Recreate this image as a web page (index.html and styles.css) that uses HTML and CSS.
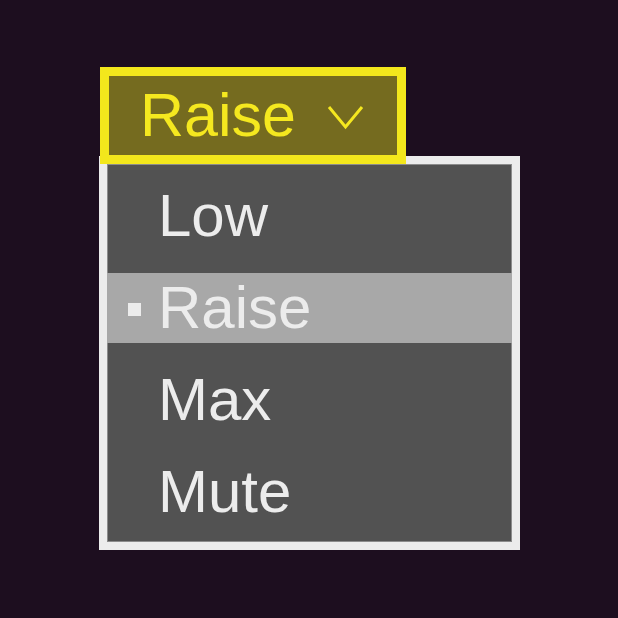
FILE: index.html
```html
<!DOCTYPE html>
<html lang="en">
<head>
    <meta charset="UTF-8">
    <meta name="viewport" content="width=device-width, initial-scale=1.0">
    <title>Volume select</title>
    <link rel="stylesheet" href="styles.css">
</head>
<body>

    <!-- Dropdown, opened -->
    <div class="select">
        <button class="select-button" type="button">
            <span class="select-value">Raise</span>
            <svg class="chevron" width="37" height="25" viewBox="0 0 37 25">
                <polyline points="2,2 18.5,22 35,2" fill="none" stroke="currentColor" stroke-width="3"/>
            </svg>
        </button>

        <ul class="select-list">
            <li class="option">Low</li>
            <li class="option selected">Raise</li>
            <li class="option">Max</li>
            <li class="option">Mute</li>
        </ul>
    </div>

</body>
</html>
```

FILE: styles.css
```css
html, body {
    min-height: 100%;
}

body {
    margin: 0;
    padding: 0;
    min-height: 618px;
    background-color: #1d0e1f;
    font-family: "Liberation Sans", Arial, sans-serif;
}

.select {
    display: flex;
    flex-direction: column;
    align-items: flex-start;
    padding: 67px 0 0 100px;
}

/* Closed button */
.select-button {
    position: relative;
    z-index: 2;
    box-sizing: border-box;
    width: 306px;
    height: 97px;
    margin: 0;
    padding: 0 33px 0 31px;
    display: flex;
    align-items: center;
    justify-content: space-between;
    background-color: #756b1f;
    border: 9px solid #f3e71c;
    color: #f5e81f;
    font-family: inherit;
    font-size: 61px;
    line-height: 79px;
}

.chevron {
    display: block;
    margin-top: 3px;
}

/* Popup list, tucked under the button */
.select-list {
    position: relative;
    z-index: 1;
    box-sizing: border-box;
    width: 421px;
    height: 394px;
    margin: -8px 0 0 -1px;
    padding: 17px 0 0 0;
    list-style: none;
    background-color: #525252;
    border: 8px solid #ececec;
    box-shadow: inset 0 0 0 1px #8c8c8c;
    display: flex;
    flex-direction: column;
    gap: 22px;
}

.option {
    position: relative;
    height: 70px;
    padding-left: 51px;
    color: #ececec;
    font-size: 60px;
    line-height: 70px;
}

.option.selected {
    background-color: #a8a8a8;
}

.option.selected::before {
    content: "";
    position: absolute;
    left: 21px;
    top: 30px;
    width: 13px;
    height: 13px;
    background-color: #ececec;
}
```
